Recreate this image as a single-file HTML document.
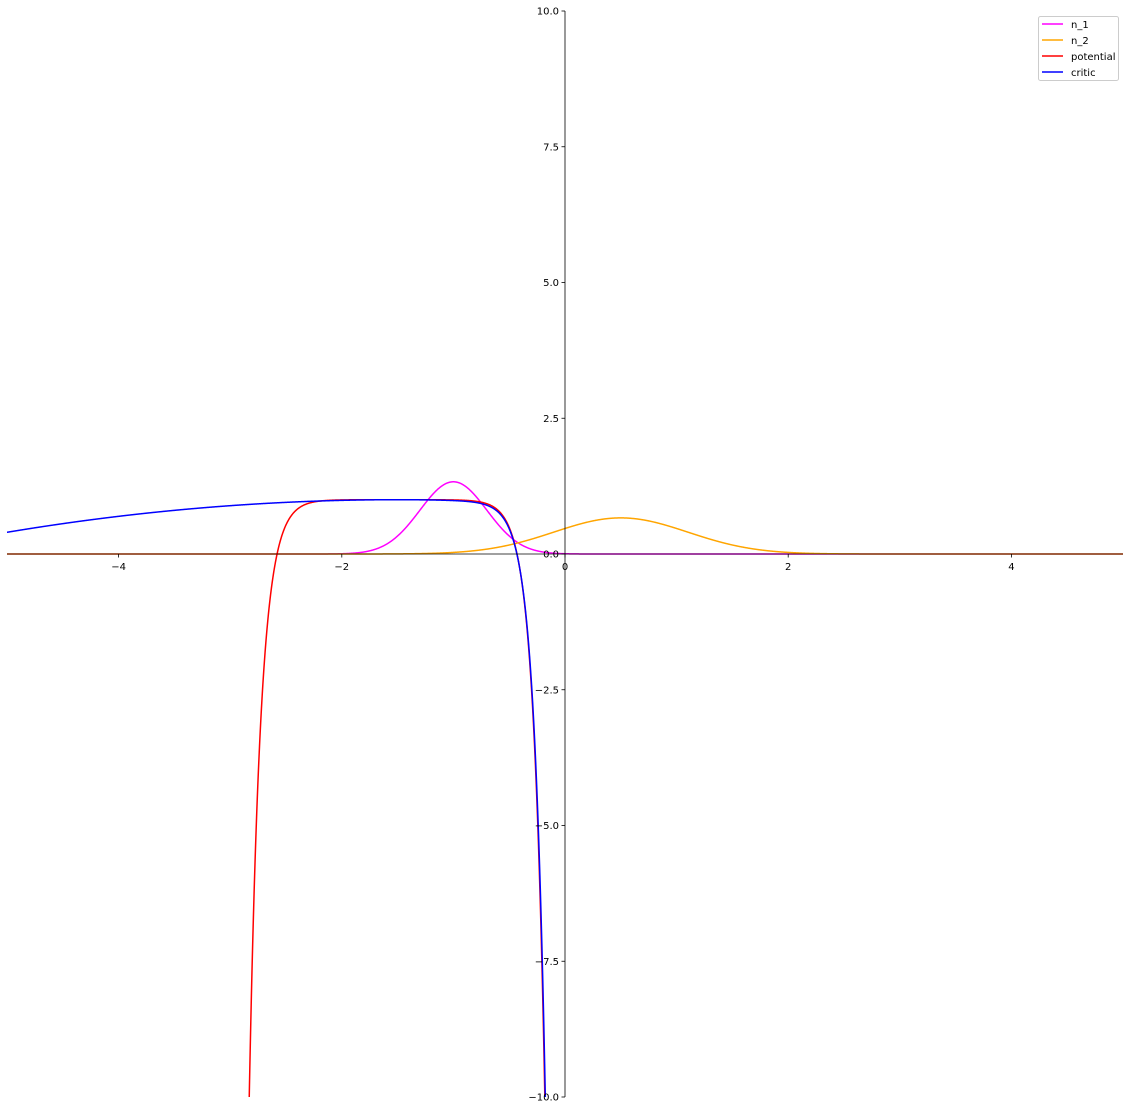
<!DOCTYPE html>
<html><head><meta charset="utf-8"><style>
html,body{margin:0;padding:0;background:#fff;}
svg text{font-family:"DejaVu Sans","Liberation Sans",sans-serif;font-size:10px;fill:#000;}
</style></head><body>
<svg id="s" width="1130" height="1111" xmlns="http://www.w3.org/2000/svg">
<defs><clipPath id="c"><rect x="7" y="11" width="1116" height="1086"/></clipPath></defs>
<g clip-path="url(#c)" fill="none" stroke-width="1.5">
<path id="n1" stroke="#ff00ff"/>
<path id="n2" stroke="#ffa500"/>
<path id="pot" stroke="#ff0000"/>
<path id="cr" stroke="#0000ff"/>
</g>
<line x1="565" y1="11" x2="565" y2="1097" stroke="#000" stroke-width="0.8"/>
<line x1="7" y1="554" x2="1123" y2="554" stroke="#000" stroke-width="0.8"/>
<g id="ticks" stroke="#000" stroke-width="0.8"></g>
<g id="lbl"></g>
<rect x="1038.5" y="16.5" width="80" height="64" rx="2" fill="#fff" fill-opacity="0.8" stroke="#ccc"/>
<line x1="1042" y1="24" x2="1063" y2="24" stroke="#ff00ff" stroke-width="1.5"/>
<line x1="1042" y1="40" x2="1063" y2="40" stroke="#ffa500" stroke-width="1.5"/>
<line x1="1042" y1="56" x2="1063" y2="56" stroke="#ff0000" stroke-width="1.5"/>
<line x1="1042" y1="72" x2="1063" y2="72" stroke="#0000ff" stroke-width="1.5"/>
<text x="1071" y="28">n_1</text>
<text x="1071" y="44">n_2</text>
<text x="1071" y="60">potential</text>
<text x="1071" y="76">critic</text>
</svg>
<script>
var X=function(x){return 565+x*111.6;},Y=function(y){return 554-y*54.3;};
function g(x,m,s){return Math.exp(-0.5*((x-m)/s)**2)/(s*Math.sqrt(2*Math.PI));}
function path(f){var d="";for(var i=0;i<=4000;i++){var x=-5+10*i/4000;var y=f(x);if(y<-10.5)y=-10.5;if(y>10.5)y=10.5;d+=(i?"L":"M")+X(x).toFixed(2)+" "+Y(y).toFixed(2);}return d;}
document.getElementById("n1").setAttribute("d",path(function(x){return g(x,-1,0.3);}));
document.getElementById("n2").setAttribute("d",path(function(x){return g(x,0.5,0.6);}));
document.getElementById("pot").setAttribute("d",path(function(x){return 1-Math.exp((x+0.43)/0.104)-Math.exp((-2.58-x)/0.104);}));
document.getElementById("cr").setAttribute("d",path(function(x){return 1-0.049*(x+1.5)**2-Math.exp((x+0.425)/0.104);}));
var t=document.getElementById("ticks"),l=document.getElementById("lbl"),ns="http://www.w3.org/2000/svg";
function el(p,n,a,txt){var e=document.createElementNS(ns,n);for(var k in a)e.setAttribute(k,a[k]);if(txt!=null)e.textContent=txt;p.appendChild(e);}
[-4,-2,0,2,4].forEach(function(v){var x=X(v);el(t,"line",{x1:x,y1:554,x2:x,y2:557.5});el(l,"text",{x:x,y:570,"text-anchor":"middle"},(v<0?"\u2212":"")+Math.abs(v));});
[10,7.5,5,2.5,0,-2.5,-5,-7.5,-10].forEach(function(v){var y=Y(v);el(t,"line",{x1:561.5,y1:y,x2:565,y2:y});el(l,"text",{x:559,y:y+3.5,"text-anchor":"end"},(v<0?"\u2212":"")+Math.abs(v).toFixed(1));});
</script>
</body></html>
